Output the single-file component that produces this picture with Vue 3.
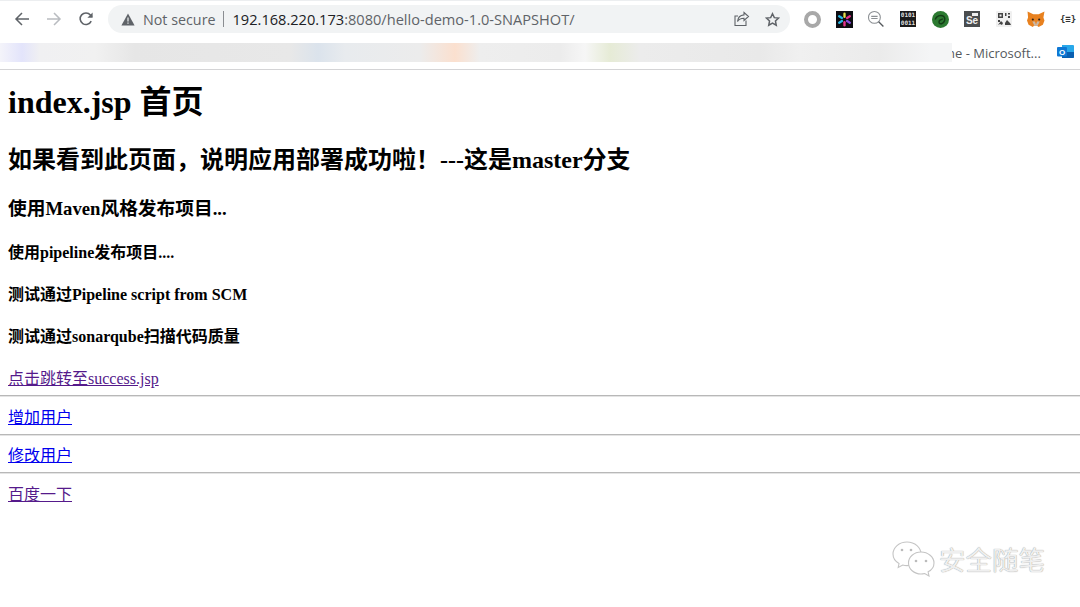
<script setup>
const links = [
  { text: '增加用户', cls: 'blue' },
  { text: '修改用户', cls: 'blue' },
  { text: '百度一下', cls: 'visited' }
]
</script>

<template>
  <div class="page">
    <header class="chrome">
      <div class="toolbar">
        <div class="navs">
          <svg width="16" height="16" viewBox="0 0 16 16"><path d="M15 8H2.500M8 2 2 8l6 6" fill="none" stroke="#5f6368" stroke-width="1.500"/></svg>
          <svg width="16" height="16" viewBox="0 0 16 16"><path d="M1 8h12.500M8 2l6 6-6 6" fill="none" stroke="#b9bcc0" stroke-width="1.500"/></svg>
          <svg width="16" height="16" viewBox="0 0 16 16"><path d="M13.200 10.200A5.800 5.800 0 1 1 12.400 4L14 5.700" fill="none" stroke="#5f6368" stroke-width="1.600"/><path d="M14.600 1.600v5.200H9.400z" fill="#5f6368"/></svg>
        </div>
        <div class="omnibox">
          <svg width="14" height="13" viewBox="0 0 14 13"><path d="M7 .5 13.600 12.500H.4z" fill="#5f6368"/><path d="M6.400 4.500h1.200v4H6.400zM6.400 9.400h1.200v1.300H6.400z" fill="#f1f3f4"/></svg>
          <span class="secure">Not secure</span>
          <span class="sep"></span>
          <span class="url"><b>192.168.220.173</b>:8080/hello-demo-1.0-SNAPSHOT/</span>
          <span class="spacer"></span>
          <svg class="omni-icon" width="17" height="16" viewBox="0 0 17 16"><path d="M11 1.500 15.500 5.500 11 9.500V7.200C7.500 7.200 5.600 8.400 4.500 10.600 4.800 7 7 4.200 11 3.900z M13 9.500v5H2V5h3" fill="none" stroke="#5f6368" stroke-width="1.100"/></svg>
          <svg width="15" height="15" viewBox="0 0 24 24"><path d="m12 2.800 2.900 6.200 6.800.8-5 4.600 1.300 6.700-6-3.400-6 3.400 1.300-6.700-5-4.600 6.800-.8z" fill="none" stroke="#5f6368" stroke-width="2.400"/></svg>
        </div>
        <div class="exts">
          <span class="ring"></span>
          <svg width="17" height="17" viewBox="0 0 16 16"><rect width="16" height="16" fill="#0d0d12"/><g stroke-width="2.200" stroke-linecap="round"><path d="M8 2.500v3" stroke="#e6e04a"/><path d="M8 10.500v3" stroke="#e8328c"/><path d="M3 5l2.600 1.500" stroke="#28b9e8"/><path d="M13 5l-2.600 1.500" stroke="#e8328c"/><path d="M3 11l2.600-1.500" stroke="#28b9e8"/><path d="M13 11l-2.600-1.500" stroke="#8a4be0"/></g></svg>
          <svg width="18" height="18" viewBox="0 0 17 17"><circle cx="7" cy="7" r="5.600" fill="none" stroke="#8b8f93" stroke-width="1"/><path d="m11 11 4.500 4.500" stroke="#55595d" stroke-width="1.300"/><path d="M4 6h6M4 8h6" stroke="#8b8f93" stroke-width="1"/></svg>
          <span class="bin">0101<br />0011</span>
          <svg width="17" height="17" viewBox="0 0 16 16"><circle cx="8" cy="8" r="8" fill="#2c7a31"/><path d="M3 8c1-3 5-5 8-3 2 2 1 6-2 7-2 .4-3-1-2-3 1-1 3-1 3-2" fill="none" stroke="#143d17" stroke-width="1.400"/></svg>
          <span class="se"><i></i>Se</span>
          <svg width="16" height="16" viewBox="0 0 16 16"><rect width="16" height="16" rx="1" fill="#f0f0f0"/><path d="M2 2h5v5H2zM3.500 3.500h2v2h-2z" fill="#444" fill-rule="evenodd"/><path d="M9 2h1.500v3H9zM12 2h2v1.500h-2zM12 5h2v2h-2zM2 9h2v2H2zM5 10l2 2-1 2-2-1-2 1zM9 12l2-3 3 3 1 2H9z" fill="#444"/></svg>
          <svg width="18" height="17" viewBox="0 0 17 16"><path d="M.5.5 6 3h5L16.500.5 15.500 6l1 3-1.500 4-4 2-1.500-1h-3L5.500 15l-4-2L0 9l1-3z" fill="#e8811f"/><path d="M5 10h2.500l1 3 1-3H12l-2 4H7z" fill="#c9b8a8"/><circle cx="5.500" cy="8" r="1" fill="#2c2018"/><circle cx="11.500" cy="8" r="1" fill="#2c2018"/></svg>
          <span class="json">{≡}</span>
        </div>
      </div>
      <div class="bookmarks">
        <span class="bm-text">ne - Microsoft...</span>
        <div class="blur-strip"></div>
        <svg class="outlook" width="17" height="13" viewBox="0 0 17 13"><path d="M5 0h11a1 1 0 0 1 1 1v11a1 1 0 0 1-1 1H5z" fill="#28a8ea"/><path d="M5 7h12v5a1 1 0 0 1-1 1H5z" fill="#0a5fb0"/><rect x="0" y="2" width="10" height="9.500" rx="1" fill="#0f78d4"/><text x="5" y="9.500" class="o">O</text></svg>
      </div>
    </header>

    <main class="content">
      <h1>index.jsp 首页</h1>
      <h2>如果看到此页面，说明应用部署成功啦！---这是master分支</h2>
      <h3>使用Maven风格发布项目...</h3>
      <h4>使用pipeline发布项目....</h4>
      <h4>测试通过Pipeline script from SCM</h4>
      <h4>测试通过sonarqube扫描代码质量</h4>
      <a class="link visited" href="#">点击跳转至success.jsp</a>
      <template v-for="l in links" :key="l.text">
        <hr />
        <a class="link" :class="l.cls" href="#">{{ l.text }}</a>
      </template>

      <div class="watermark">
        <svg width="46" height="36" viewBox="0 0 44 36">
          <g fill="#fff" stroke="#c4c4c4" stroke-width="1.100">
            <path d="M15 1C7 1 1 6.500 1 13c0 4 2.500 7.500 6 9.500l-.8 4 4.500-2.500c1.500.4 2.800.6 4.300.6C23 24.600 29 19.300 29 13S23 1 15 1z"/>
            <path d="M29 11c-7 0-12.500 5-12.500 11S22 33 29 33c1.300 0 2.500-.2 3.700-.5l4.300 2.500-.9-4.200C39.800 29 42 25.700 42 22c0-6-6-11-13-11z"/>
          </g>
          <g fill="#bbb"><circle cx="10" cy="9" r="1.300"/><circle cx="19" cy="9" r="1.300"/><circle cx="24" cy="20" r="1.300"/><circle cx="34" cy="20" r="1.300"/></g>
        </svg>
        <span>安全随笔</span>
      </div>
    </main>
  </div>
</template>

<style scoped>
.page {
  width: 1080px;
  height: 607px;
  overflow: hidden;
  background: #fff;
  position: relative;
  font-family: "Liberation Serif", "Noto Sans CJK SC", serif;
  color: #000;
}
.chrome {
  height: 70px;
  border-bottom: 1px solid #d4d4d6;
  box-sizing: border-box;
  border-top: 1px solid #eceef0;
  display: flex;
  flex-direction: column;
  font-family: "Open Sans", "Noto Sans", sans-serif;
}
.toolbar {
  height: 36px;
  display: flex;
  align-items: center;
}
.navs {
  display: flex;
  gap: 16px;
  padding-left: 14px;
  width: 108px;
  box-sizing: border-box;
}
.omnibox {
  width: 682px;
  height: 28px;
  background: #f1f3f4;
  border-radius: 14px;
  display: flex;
  align-items: center;
  padding: 0 10px 0 13px;
  box-sizing: border-box;
  font-size: 14.500px;
}
.secure { color: #5f6368; margin-left: 8px; font-size: 14.300px; }
.sep { width: 1px; height: 16px; background: #8a8d91; margin: 0 9px 0 7px; }
.url { color: #5f6368; white-space: nowrap; font-size: 14.600px; }
.url b { font-weight: 400; color: #202124; }
.spacer { flex: 1; }
.omni-icon { margin-right: 15px; }
.exts {
  display: grid;
  grid-auto-flow: column;
  grid-auto-columns: 16px;
  gap: 16px;
  place-items: center;
  margin-left: 14px;
}
.ring {
  width: 17px;
  height: 17px;
  box-sizing: border-box;
  border: 4px solid #a8a8a8;
  border-radius: 50%;
}
.bin {
  width: 16px;
  height: 16px;
  background: #1a1a1a;
  color: #ddd;
  font: 700 6px/8px "DejaVu Sans Mono", monospace;
  text-align: center;
}
.se {
  width: 16px;
  height: 16px;
  background: #4a4d4f;
  color: #eee;
  font: 700 10px/20px "Liberation Sans", sans-serif;
  text-align: center;
  position: relative;
}
.se i {
  position: absolute;
  right: 2px;
  top: 2px;
  width: 6px;
  height: 3px;
  background: #eee;
}
.json {
  font: 700 9px/16px "DejaVu Sans Mono", monospace;
  color: #333;
  white-space: nowrap;
}
.bookmarks {
  flex: 1;
  position: relative;
}
.blur-strip {
  position: absolute;
  left: 0;
  top: 6px;
  width: 952px;
  height: 19px;
  background: linear-gradient(90deg,
    #f4f4fa 0, #e3e4fb 22px, #f0f0f2 40px, #f1f1f1 95px, #e6e6e6 135px, #e8e8e8 290px,
    #dbe3ec 318px, #e8ebee 345px, #ececec 420px, #fbe0cf 455px, #eeeeee 480px,
    #ececec 560px, #f6f6f6 585px, #e6ebd6 610px, #ececec 640px, #e9e9e9 760px,
    #f0f0f0 800px, #ebebeb 880px, #f4f5f6 930px, #f4f5f6 952px);
}
.bm-text {
  position: absolute;
  left: 947px;
  top: 7px;
  font-size: 13px;
  line-height: 18px;
  color: #55585c;
  white-space: nowrap;
}
.outlook {
  position: absolute;
  left: 1057px;
  top: 8px;
}
.o {
  font: 700 8px "Liberation Sans", sans-serif;
  fill: #fff;
  text-anchor: middle;
}
.content {
  padding: 0 0 0 8px;
  position: relative;
  height: 537px;
}
h1, h2, h3, h4 {
  margin: 0;
  font-weight: 700;
  white-space: nowrap;
}
h1 { font-size: 32px; line-height: 38px; padding-top: 13px; margin-bottom: 25px; }
h2 { font-size: 24px; line-height: 28px; margin-bottom: 23px; }
h3 { font-size: 18.720px; line-height: 24px; margin-bottom: 22px; }
h4 { font-size: 16px; line-height: 20px; margin-bottom: 22px; }
.link {
  display: block;
  width: fit-content;
  font-size: 16px;
  line-height: 20px;
}
.blue { color: #0000ee; }
.visited { color: #551a8b; }
hr {
  margin: 6px 0 10.500px -8px;
  width: 1080px;
  height: 2px;
  box-sizing: border-box;
  border: 0;
  background: #b8b8b8;
  border-bottom: 1px solid #e4e4e4;
}
.watermark {
  position: absolute;
  left: 891px;
  top: 471px;
  display: flex;
  align-items: center;
  gap: 2px;
  color: #efefef;
  text-shadow: 0 0 1px #808080;
  font: 400 26.500px/36px "Noto Sans CJK SC", sans-serif;
}
</style>
